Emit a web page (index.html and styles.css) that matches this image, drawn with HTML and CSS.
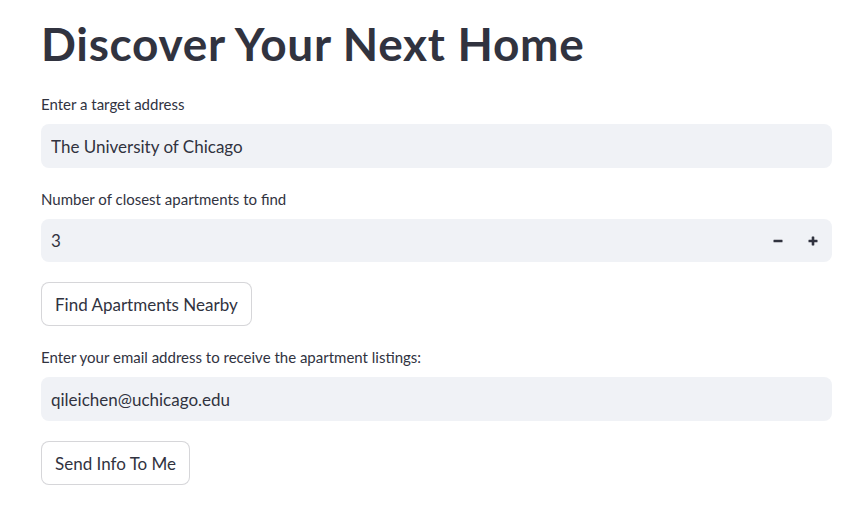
FILE: index.html
```html
<!DOCTYPE html>
<html lang="en">
<head>
<meta charset="utf-8">
<title>Discover Your Next Home</title>
<link rel="stylesheet" href="styles.css">
</head>
<body>
<main class="main">
  <h1 class="title">Discover Your Next Home</h1>

  <div class="field">
    <label class="label" for="addr">Enter a target address</label>
    <div class="input-box">
      <input id="addr" class="input" type="text" value="The University of Chicago">
    </div>
  </div>

  <div class="field">
    <label class="label" for="num">Number of closest apartments to find</label>
    <div class="input-box number-box">
      <input id="num" class="input" type="text" value="3">
      <button class="step" type="button" aria-label="Decrement">
        <svg width="10" height="10" viewBox="0 0 10 10"><rect x="0.5" y="3.7" width="9" height="2.6" rx="0.4" fill="#31333F"/></svg>
      </button>
      <button class="step" type="button" aria-label="Increment">
        <svg width="10" height="10" viewBox="0 0 10 10"><rect x="0.5" y="3.7" width="9" height="2.6" rx="0.4" fill="#31333F"/><rect x="3.7" y="0.5" width="2.6" height="9" rx="0.4" fill="#31333F"/></svg>
      </button>
    </div>
  </div>

  <div class="field">
    <button class="btn" type="button">Find Apartments Nearby</button>
  </div>

  <div class="field">
    <label class="label" for="email">Enter your email address to receive the apartment listings:</label>
    <div class="input-box">
      <input id="email" class="input" type="text" value="qileichen@uchicago.edu">
    </div>
  </div>

  <div class="field">
    <button class="btn" type="button">Send Info To Me</button>
  </div>
</main>
</body>
</html>
```

FILE: styles.css
```css
* { box-sizing: border-box; }

html, body {
  margin: 0;
  background: #ffffff;
}

body {
  font-family: "Lato", "Liberation Sans", sans-serif;
  color: #31333F;
}

.main {
  padding: 15px 33px 0 41px;
  display: flex;
  flex-direction: column;
  gap: 20px;
}

.title {
  margin: 0;
  font-size: 46px;
  font-weight: 700;
  line-height: 58px;
  color: #31333F;
  letter-spacing: 0.7px;
}

.field {
  display: flex;
  flex-direction: column;
}

.label {
  font-size: 15px;
  line-height: 22px;
  margin-bottom: 9px;
  color: #31333F;
}

.input-box {
  height: 44px;
  background: #F0F2F6;
  border-radius: 8px;
  display: flex;
  align-items: center;
}

.input {
  flex: 1;
  min-width: 0;
  height: 100%;
  border: none;
  background: transparent;
  padding: 0 10px;
  font-family: inherit;
  font-size: 17px;
  color: #31333F;
  outline: none;
}

.number-box { height: 43px; }

.step {
  width: 35px;
  height: 100%;
  border: none;
  background: transparent;
  display: flex;
  align-items: center;
  justify-content: center;
  padding: 0;
}

.step:last-child { margin-right: 2px; }

.btn {
  align-self: flex-start;
  height: 44px;
  padding: 0 13px;
  background: #ffffff;
  border: 1px solid rgba(49, 51, 63, 0.2);
  border-radius: 8px;
  font-family: inherit;
  font-size: 17px;
  color: #31333F;
}
```
